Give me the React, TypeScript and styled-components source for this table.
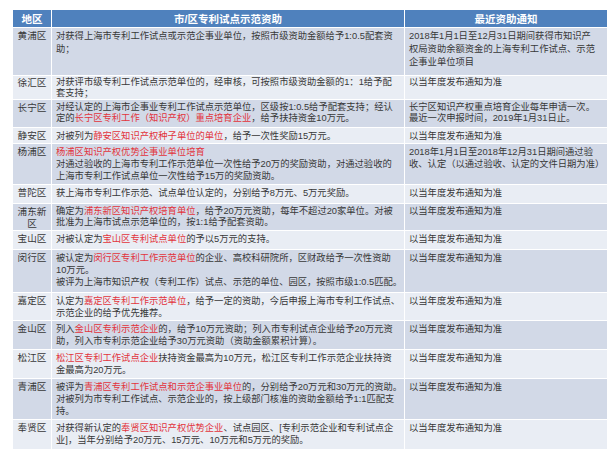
import React from 'react';
import styled, { createGlobalStyle } from 'styled-components';

const GlobalStyle = createGlobalStyle`
  html, body {
    margin: 0;
    padding: 0;
    background: #ffffff;
  }
  body {
    font-family: "Liberation Sans", "Noto Sans CJK SC", sans-serif;
  }
`;

const Page = styled.div`
  width: 612px;
  height: 455px;
  padding: 9px 0 0 12px;
  box-sizing: border-box;
  overflow: hidden;
`;

const Table = styled.table`
  border-collapse: collapse;
  table-layout: fixed;
  width: 592px;
`;

const HeadRow = styled.tr`
  height: 18px;
  background: #4f81bd;
`;

const HeadCell = styled.th<{ $w: number }>`
  width: ${p => p.$w}px;
  padding: 0;
  border: 1px solid #ffffff;
  color: #ffffff;
  font-size: 10.5px;
  font-weight: bold;
  line-height: 12px;
  text-align: center;
  vertical-align: middle;
`;

const Row = styled.tr<{ $dark: boolean; $h: number }>`
  height: ${p => p.$h}px;
  background: ${p => (p.$dark ? '#d2d9e7' : '#e9edf4')};
`;

const AreaCell = styled.td<{ $pt: number }>`
  padding: ${p => p.$pt}px 2px 0;
  border: 1px solid #ffffff;
  vertical-align: top;
  text-align: center;
  color: #383838;
  font-size: 9.6px;
  line-height: 12px;
`;

const TextCell = styled.td<{ $lh: number; $pt: number }>`
  padding: ${p => p.$pt}px 4px 0 4px;
  border: 1px solid #ffffff;
  vertical-align: top;
  color: #383838;
  font-size: 9.3px;
  line-height: ${p => p.$lh}px;
  white-space: nowrap;
  overflow: visible;
`;

const Line = styled.div`
  white-space: nowrap;
`;

const Red = styled.span`
  color: #e2343c;
`;

// segments in [ ] are drawn red
const renderLine = (s: string) =>
  s.split(/(\[[^\]]*\])/).map((part, i) =>
    part.startsWith('[') ? <Red key={i}>{part.slice(1, -1)}</Red> : <React.Fragment key={i}>{part}</React.Fragment>
  );

interface Item {
  area: string[];
  support: string[];
  notice: string[];
  h: number;
  lh?: number;
  pt?: number;
}

const SAME = ['以当年度发布通知为准'];

const rows: Item[] = [
  {
    area: ['黄浦区'],
    support: ['对获得上海市专利工作试点或示范企事业单位，按照市级资助金额给予1:0.5配套资', '助；'],
    notice: ['2018年1月1日至12月31日期间获得市知识产', '权局资助余额资金的上海专利工作试点、示范', '企事业单位项目'],
    h: 48,
    lh: 13,
  },
  {
    area: ['徐汇区'],
    support: ['对获评市级专利工作试点示范单位的，经审核，可按照市级资助金额的1：1给予配', '套支持；'],
    notice: SAME,
    h: 23,
    lh: 11,
    pt: 1,
  },
  {
    area: ['长宁区'],
    support: ['对经认定的上海市企事业专利工作试点示范单位，区级按1:0.5给予配套支持；经认', '定的[长宁区专利工作（知识产权）重点培育企业]，给予扶持资金10万元。'],
    notice: ['长宁区知识产权重点培育企业每年申请一次。', '最近一次申报时间，2019年1月31日止。'],
    h: 28,
    lh: 11,
  },
  {
    area: ['静安区'],
    support: ['对被列为[静安区知识产权种子单位的单位]，给予一次性奖励15万元。'],
    notice: SAME,
    h: 16,
  },
  {
    area: ['杨浦区'],
    support: ['[杨浦区知识产权优势企事业单位培育]', '对通过验收的上海市专利工作示范单位一次性给予20万的奖励资助，对通过验收的', '上海市专利工作试点单位一次性给予15万的奖励资助。'],
    notice: ['2018年1月1日至2018年12月31日期间通过验', '收、认定（以通过验收、认定的文件日期为准）'],
    h: 41,
  },
  {
    area: ['普陀区'],
    support: ['获上海市专利工作示范、试点单位认定的，分别给予8万元、5万元奖励。'],
    notice: SAME,
    h: 19,
  },
  {
    area: ['浦东新', '区'],
    support: ['确定为[浦东新区知识产权培育单位]，给予20万元资助，每年不超过20家单位。对被', '批准为上海市试点示范单位的，按1:1给予配套资助。'],
    notice: SAME,
    h: 26,
    lh: 11,
  },
  {
    area: ['宝山区'],
    support: ['对被认定为[宝山区专利试点单位]的予以5万元的支持。'],
    notice: SAME,
    h: 19,
  },
  {
    area: ['闵行区'],
    support: ['被认定为[闵行区专利工作示范单位]的企业、高校科研院所，区财政给予一次性资助', '10万元。', '被评为上海市知识产权（专利工作）试点、示范的单位、园区，按照市级1:0.5匹配。'],
    notice: SAME,
    h: 43,
  },
  {
    area: ['嘉定区'],
    support: ['认定为[嘉定区专利工作示范单位]，给予一定的资助，今后申报上海市专利工作试点、', '示范企业的给予优先推荐。'],
    notice: SAME,
    h: 28,
  },
  {
    area: ['金山区'],
    support: ['列入[金山区专利示范企业]的，给予10万元资助；列入市专利试点企业给予20万元资', '助，列入市专利示范企业给予30万元资助（资助金额累积计算）。'],
    notice: SAME,
    h: 29,
  },
  {
    area: ['松江区'],
    support: ['[松江区专利工作试点企业]扶持资金最高为10万元，松江区专利工作示范企业扶持资', '金最高为20万元。'],
    notice: SAME,
    h: 29,
  },
  {
    area: ['青浦区'],
    support: ['被评为[青浦区专利工作试点和示范企事业单位]的，分别给予20万元和30万元的资助。', '对被列为市专利工作试点、示范企业的，按上级部门核准的资助金额给予1:1匹配支', '持。'],
    notice: SAME,
    h: 41,
  },
  {
    area: ['奉贤区'],
    support: ['对获得新认定的[奉贤区知识产权优势企业]、试点园区、[专利示范企业和专利试点企', '业]，当年分别给予20万元、15万元、10万元和5万元的奖励。'],
    notice: SAME,
    h: 30,
  },
];

const App: React.FC = () => {
  return (
    <Page>
      <GlobalStyle />
      <Table>
        <thead>
          <HeadRow>
            <HeadCell $w={38}>地区</HeadCell>
            <HeadCell $w={352}>市/区专利试点示范资助</HeadCell>
            <HeadCell $w={202}>最近资助通知</HeadCell>
          </HeadRow>
        </thead>
        <tbody>
          {rows.map((r, i) => (
            <Row key={r.area.join('')} $dark={i % 2 === 0} $h={r.h}>
              <AreaCell $pt={r.pt ?? 2}>
                {r.area.map(a => (
                  <Line key={a}>{a}</Line>
                ))}
              </AreaCell>
              <TextCell $lh={r.lh ?? 12} $pt={r.pt ?? 2}>
                {r.support.map((s, j) => (
                  <Line key={j}>{renderLine(s)}</Line>
                ))}
              </TextCell>
              <TextCell $lh={r.lh ?? 12} $pt={r.pt ?? 2}>
                {r.notice.map((s, j) => (
                  <Line key={j}>{renderLine(s)}</Line>
                ))}
              </TextCell>
            </Row>
          ))}
        </tbody>
      </Table>
    </Page>
  );
};

export default App;
